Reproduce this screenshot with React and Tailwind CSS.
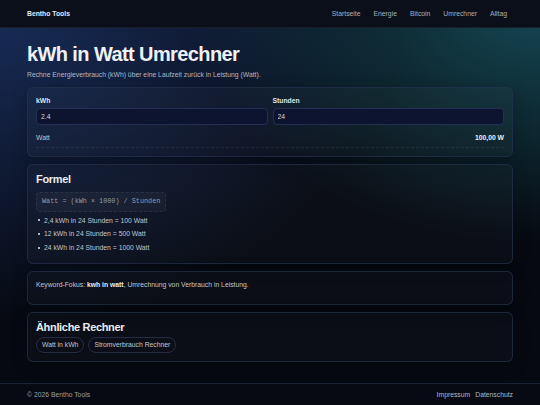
// App.jsx
const navLinks = ["Startseite", "Energie", "Bitcoin", "Umrechner", "Alltag"];

const examples = [
  "2,4 kWh in 24 Stunden = 100 Watt",
  "12 kWh in 24 Stunden = 500 Watt",
  "24 kWh in 24 Stunden = 1000 Watt",
];

function Card({ children }) {
  return (
    <section className="rounded-[6px] border border-[#25324f]/70 bg-white/[0.025] p-[8px] shadow-[0_4px_16px_rgba(0,0,0,0.25)]">
      {children}
    </section>
  );
}

export default function App() {
  return (
    <div className="flex min-h-screen flex-col bg-[#060911] bg-[image:radial-gradient(ellipse_65%_60%_at_100%_0%,rgba(24,84,96,0.85),transparent),radial-gradient(ellipse_75%_80%_at_0%_0%,rgba(30,54,108,0.8),transparent)] font-['Liberation_Sans',Arial,sans-serif] text-[6.8px] leading-[1.4] text-[#c0c5ce]">
      {/* Header */}
      <header className="flex h-[28px] items-center justify-between border-b border-white/[0.06] bg-[#0a0f1a] px-[27px]">
        <span className="font-bold text-[#e6eaf0]">Bentho Tools</span>
        <nav className="mr-[6px] flex items-center gap-[13px] text-[#a9b0bc]">
          {navLinks.map((l) => (
            <a key={l} href="#">{l}</a>
          ))}
        </nav>
      </header>

      {/* Main */}
      <main className="flex-1 px-[27px] pb-[20px] pt-[14px]">
        <h1 className="text-[20px] font-bold leading-[24px] tracking-[-0.03em] text-[#eef1f5]">
          kWh in Watt Umrechner
        </h1>
        <p className="mt-[4px] text-[#b3b9c4]">
          Rechne Energieverbrauch (kWh) über eine Laufzeit zurück in Leistung (Watt).
        </p>

        <div className="mt-[7px] flex flex-col gap-[7px]">
          <Card>
            <div className="grid grid-cols-2 gap-[5px]">
              <label className="flex flex-col gap-[3px]">
                <span className="font-bold text-[#dfe3ea]">kWh</span>
                <input
                  defaultValue="2.4"
                  className="h-[17px] rounded-[4px] border border-[#232f55] bg-[#0d1430] px-[4px] text-[#d3d8e0] outline-none"
                />
              </label>
              <label className="flex flex-col gap-[3px]">
                <span className="font-bold text-[#dfe3ea]">Stunden</span>
                <input
                  defaultValue="24"
                  className="h-[17px] rounded-[4px] border border-[#232f55] bg-[#0d1430] px-[4px] text-[#d3d8e0] outline-none"
                />
              </label>
            </div>
            <div className="mt-[8px] flex items-center justify-between border-b border-dashed border-white/[0.07] pb-[4px]">
              <span>Watt</span>
              <span className="font-bold text-[#eef1f5]">100,00 W</span>
            </div>
          </Card>

          <Card>
            <h2 className="mb-[7px] text-[11px] font-bold leading-[12px] tracking-[-0.03em] text-[#e9ecf1]">
              Formel
            </h2>
            <div className="inline-flex h-[20px] items-center rounded-[4px] border border-dashed border-white/[0.07] bg-white/[0.035] px-[5px] font-['Liberation_Mono','Courier_New',monospace] text-[#939aa6]">
              Watt = (kWh × 1000) / Stunden
            </div>
            <ul className="mt-[2px]">
              {examples.map((e) => (
                <li key={e} className="flex items-center gap-[4px] pl-[2px] leading-[13.7px]">
                  <span className="h-[2px] w-[2px] bg-[#b0b6c0]" />
                  {e}
                </li>
              ))}
            </ul>
          </Card>

          <Card>
            <p className="mb-[7px]">
              Keyword-Fokus: <strong className="text-[#e9ecf1]">kwh in watt</strong>, Umrechnung von
              Verbrauch in Leistung.
            </p>
          </Card>

          <Card>
            <h2 className="mb-[4px] text-[11px] font-bold leading-[12px] tracking-[-0.03em] text-[#e9ecf1]">
              Ähnliche Rechner
            </h2>
            <div className="flex gap-[4px]">
              <a href="#" className="flex h-[16px] items-center rounded-full border border-[#2a3553]/80 px-[5px]">
                Watt in kWh
              </a>
              <a href="#" className="flex h-[16px] items-center rounded-full border border-[#2a3553]/80 px-[5px]">
                Stromverbrauch Rechner
              </a>
            </div>
          </Card>
        </div>
      </main>

      {/* Footer */}
      <footer className="flex h-[22px] items-center justify-between border-t border-[#1b2436] bg-[#070a12] px-[27px] text-[#9aa1ad]">
        <span>© 2026 Bentho Tools</span>
        <div className="flex gap-[5px] text-[#b0b7c2]">
          <a href="#">Impressum</a>
          <a href="#">Datenschutz</a>
        </div>
      </footer>
    </div>
  );
}
